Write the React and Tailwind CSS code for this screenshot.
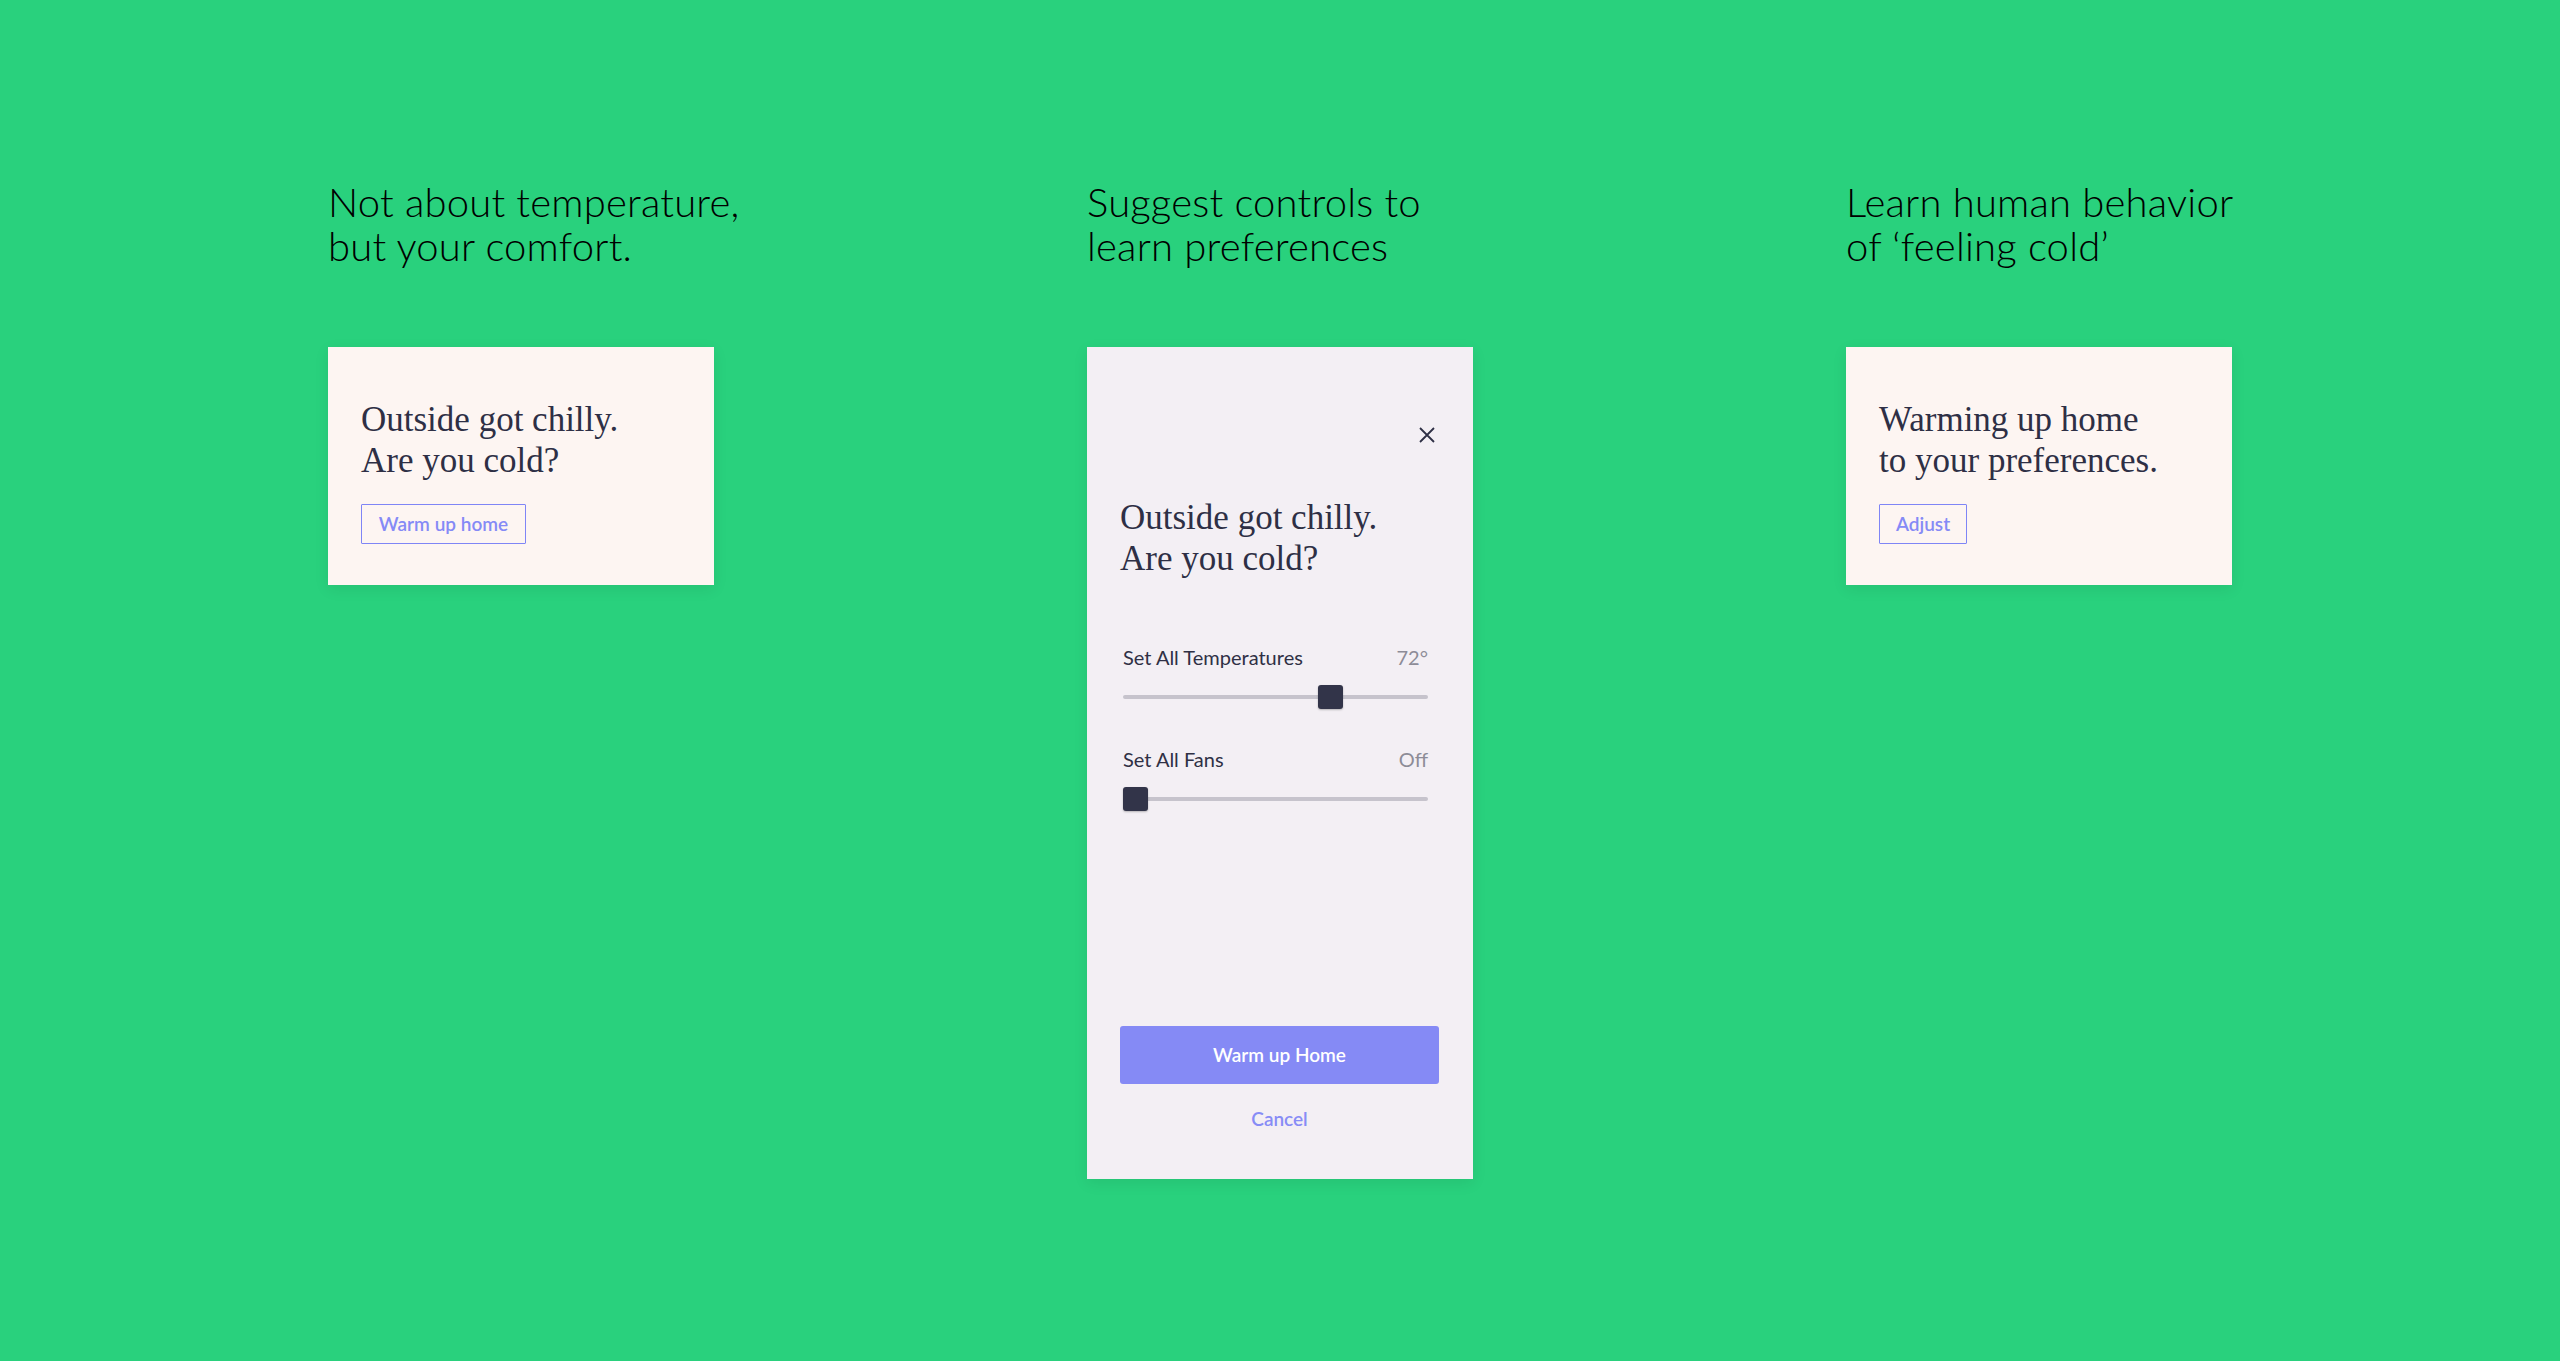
import React from "react";

const serif = "font-['Liberation_Serif',serif]";
const sans = "font-['Lato','Open_Sans',sans-serif]";

const Slider = ({ label, value, pos }) => (
  <div className="flex flex-col">
    <div className={`flex justify-between items-baseline pl-[3px] pr-[11px] text-[20px] leading-[24px] ${sans}`}>
      <span className="text-[#2f3045]">{label}</span>
      <span className="text-[#8d8c97]">{value}</span>
    </div>
    <div className="relative mt-[16px] ml-[3px] mr-[11px] h-[24px] flex items-center">
      <div className="w-full h-[4px] rounded-full bg-[#c6c3cc]" />
      <div
        className="absolute top-0 w-[25px] h-[24px] rounded-[3px] bg-[#323449] shadow-[0_1px_2px_rgba(0,0,0,0.25)]"
        style={{ left: pos }}
      />
    </div>
  </div>
);

const Heading = ({ children }) => (
  <h2 className={`whitespace-nowrap text-[40px] leading-[44px] font-light text-black tracking-[0.2px] ${sans}`}>
    {children}
  </h2>
);

const SmallCard = ({ title, action, btnWidth }) => (
  <div className="mt-[79px] h-[238px] bg-[#fdf5f2] shadow-[0_4px_14px_rgba(0,0,0,0.08)] pl-[33px] pt-[52px]">
    <p className={`whitespace-nowrap text-[35px] leading-[41px] text-[#2e2f45] ${serif}`}>{title}</p>
    <button
      className={`mt-[23px] h-[40px] border-[1.5px] border-[#7f85f6] rounded-[1px] text-[19px] font-semibold text-[#858af6] ${sans} ${btnWidth}`}
    >
      {action}
    </button>
  </div>
);

export default function App() {
  return (
    <div className="min-h-[1361px] w-full bg-[#29d17d] flex justify-center gap-[373px] pt-[180px]">
      <div className="w-[386px] flex flex-col">
        <Heading>
          Not about temperature,
          <br />
          but your comfort.
        </Heading>
        <SmallCard
          title={
            <>
              Outside got chilly.
              <br />
              Are you cold?
            </>
          }
          action="Warm up home"
          btnWidth="w-[165px]"
        />
      </div>

      <div className="w-[386px] flex flex-col">
        <Heading>
          Suggest controls to
          <br />
          learn preferences
        </Heading>
        <div className="mt-[79px] h-[832px] bg-[#f3eff4] shadow-[0_4px_14px_rgba(0,0,0,0.08)] flex flex-col pl-[33px] pr-[34px] pt-[79px]">
          <div className="flex justify-end pr-[3px]">
            <svg width="18" height="18" viewBox="0 0 18 18" fill="none" stroke="#2e2f45" strokeWidth="1.8">
              <path d="M2 2 L16 16 M16 2 L2 16" />
            </svg>
          </div>
          <p className={`mt-[53px] whitespace-nowrap text-[35px] leading-[41px] text-[#2e2f45] ${serif}`}>
            Outside got chilly.
            <br />
            Are you cold?
          </p>
          <div className="mt-[66px] flex flex-col gap-[38px]">
            <Slider label="Set All Temperatures" value="72°" pos={195} />
            <Slider label="Set All Fans" value="Off" pos={0} />
          </div>
          <button
            className={`mt-[215px] h-[58px] w-[319px] rounded-[3px] bg-[#858af5] text-white text-[19px] font-semibold ${sans}`}
          >
            Warm up Home
          </button>
          <button className={`mt-[21px] text-[19px] font-semibold text-[#878cf6] ${sans}`}>
            Cancel
          </button>
        </div>
      </div>

      <div className="w-[386px] flex flex-col">
        <Heading>
          Learn human behavior
          <br />
          of ‘feeling cold’
        </Heading>
        <SmallCard
          title={
            <>
              Warming up home
              <br />
              to your preferences.
            </>
          }
          action="Adjust"
          btnWidth="w-[88px]"
        />
      </div>
    </div>
  );
}
